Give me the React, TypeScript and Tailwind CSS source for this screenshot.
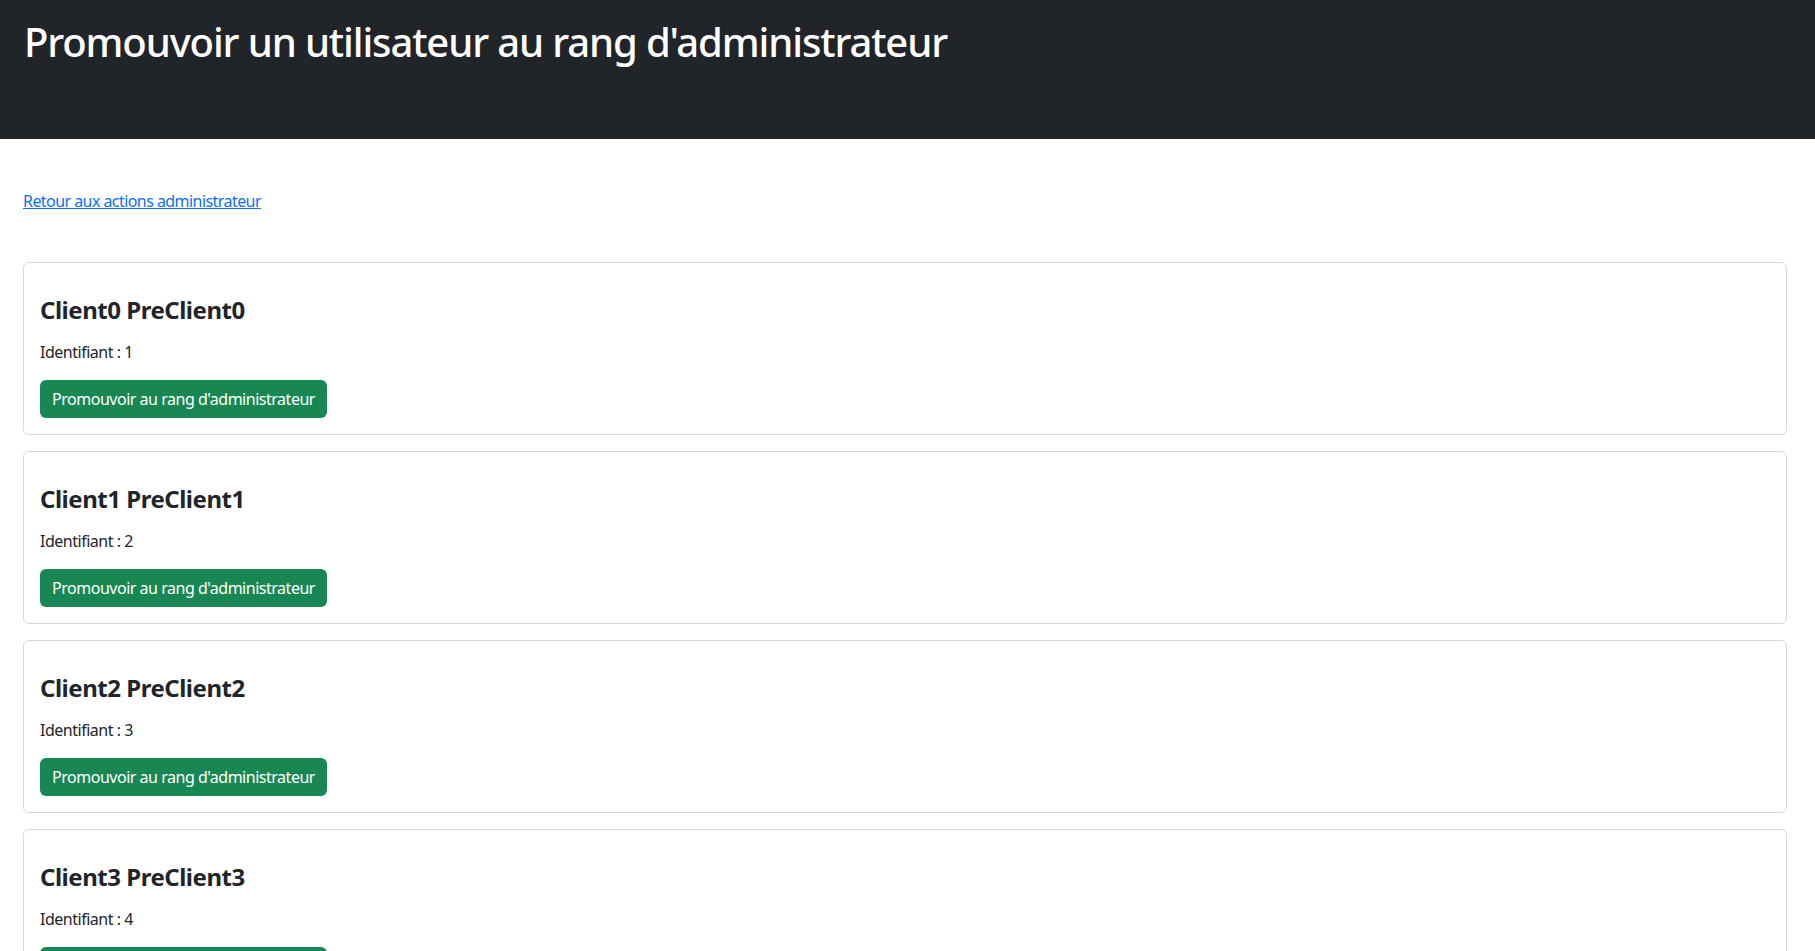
import React from 'react';

const clients = [
  { id: 1, nom: 'Client0', prenom: 'PreClient0' },
  { id: 2, nom: 'Client1', prenom: 'PreClient1' },
  { id: 3, nom: 'Client2', prenom: 'PreClient2' },
  { id: 4, nom: 'Client3', prenom: 'PreClient3' },
  { id: 5, nom: 'Client4', prenom: 'PreClient4' },
];

function ClientCard({ id, nom, prenom }: { id: number; nom: string; prenom: string }) {
  return (
    <div className="border border-[#d9d9d9] rounded-[6px] bg-white p-4">
      <h4 className="mt-4 mb-4 text-[24px] leading-[29px] font-bold tracking-[-0.02em] text-[#212529]">
        {nom} {prenom}
      </h4>
      <p className="mb-4 text-[16px] leading-6 tracking-[-0.03em] text-[#212529]">Identifiant : {id}</p>
      <button className="h-[38px] px-3 rounded-[6px] bg-[#198754] text-white text-[16px] leading-6 tracking-[-0.03em] hover:bg-[#157347]">
        Promouvoir au rang d'administrateur
      </button>
    </div>
  );
}

export default function App() {
  return (
    <div className="min-h-screen bg-white font-['Noto_Sans',sans-serif]">
      {/* Bandeau titre */}
      <div className="h-[139px] bg-[#212529] px-6 pt-[18px]">
        <h1 className="text-[40px] leading-[48px] font-medium tracking-[-0.028em] text-white">
          Promouvoir un utilisateur au rang d'administrateur
        </h1>
      </div>

      <div className="pl-[23px] pr-[28px]">
        <div className="mt-[50px]">
          <a href="#" className="text-[16px] leading-6 tracking-[-0.035em] text-[#0d6efd] underline">
            Retour aux actions administrateur
          </a>
        </div>

        <div className="mt-[49px] flex flex-col gap-4 pb-6">
          {clients.map((c) => (
            <ClientCard key={c.id} {...c} />
          ))}
        </div>
      </div>
    </div>
  );
}
